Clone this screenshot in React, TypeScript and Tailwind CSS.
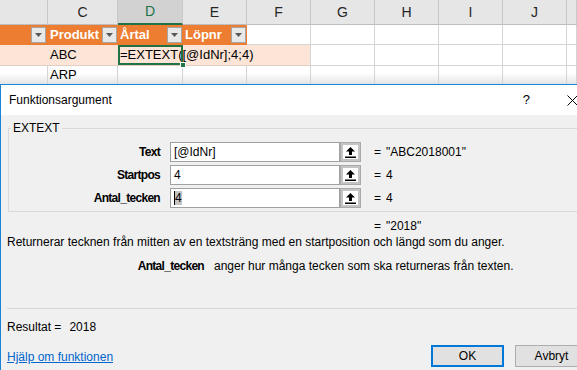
import { FC } from "react";

const cols = [
  { w: "w-[48px]", label: "" },
  { w: "w-[70px]", label: "C" },
  { w: "w-[65px]", label: "D" },
  { w: "w-[64px]", label: "E" },
  { w: "w-[64px]", label: "F" },
  { w: "w-[64px]", label: "G" },
  { w: "w-[64px]", label: "H" },
  { w: "w-[64px]", label: "I" },
  { w: "w-[64px]", label: "J" },
  { w: "w-[10px]", label: "" },
];

const Dropdown: FC = () => (
  <div className="w-[15px] h-[16px] shrink-0 bg-[#e8e8e8] border border-[#a6a6a6] flex items-center justify-center">
    <svg width="7" height="4" viewBox="0 0 7 4">
      <path d="M0 0 L7 0 L3.5 4 Z" fill="#595959" />
    </svg>
  </div>
);

const RefButton: FC = () => (
  <div className="w-[21px] h-[20px] shrink-0 border-[3px] border-[#c4c4c4] bg-white flex items-center justify-center outline outline-1 -outline-offset-1 outline-[#a9a9a9]">
    <svg width="11" height="11" viewBox="0 0 11 11">
      <path d="M5.5 0 L10 4.5 L7 4.5 L7 8 L4 8 L4 4.5 L1 4.5 Z" fill="#000" />
      <rect x="0" y="9.5" width="11" height="1.5" fill="#000" />
    </svg>
  </div>
);

const ArgRow: FC<{ label: string; value: string; result: string; caret?: boolean }> = ({
  label,
  value,
  result,
  caret,
}) => (
  <div className="flex items-center h-[20px]">
    <div className="w-[151px] text-right font-bold tracking-[-0.7px]">{label}</div>
    <div className="ml-[10px] w-[170px] h-[20px] bg-white border border-[#a0a0a0] flex items-center pl-[3px]">
      {caret ? (
        <span className="bg-[#c4c4c4] border-l border-black leading-[14px]">{value}</span>
      ) : (
        value
      )}
    </div>
    <RefButton />
    <span className="ml-[13px]">=</span>
    <span className="ml-[5px]">{result}</span>
  </div>
);

export default function App() {
  const tableHeads = ["", "Produkt", "Årtal", "Löpnr"];

  return (
    <div className="w-[577px] h-[370px] overflow-hidden bg-white font-['Liberation_Sans',Arial,sans-serif] text-black">
      {/* spreadsheet */}
      <div className="flex w-[600px] h-[25px] bg-[#e6e6e6]">
        {cols.map((c, i) => (
          <div
            key={i}
            className={`${c.w} shrink-0 flex items-center justify-center text-[14px] border-r ${
              i === 2
                ? "bg-[#d2d2d2] text-[#217346] border-b-2 border-b-[#217346] border-r-[#c8c8c8]"
                : "text-[#262626] border-b border-[#c8c8c8] border-b-[#bdbdbd]"
            }`}
          >
            {c.label}
          </div>
        ))}
      </div>
      <div className="flex w-[600px] h-[20px]">
        {cols.map((c, i) =>
          i < 4 ? (
            <div
              key={i}
              className={`${c.w} shrink-0 bg-[#ed7d31] flex items-center justify-between pl-[2px] pr-[1px] text-white font-bold text-[13px] ${
                i === 0 ? "pr-[2px]" : ""
              }`}
            >
              <span>{tableHeads[i]}</span>
              <Dropdown />
            </div>
          ) : (
            <div key={i} className={`${c.w} shrink-0 border-r border-b border-[#d4d4d4]`} />
          )
        )}
      </div>
      <div className="flex w-[600px] h-[21px] text-[13px]">
        {cols.map((c, i) =>
          i < 5 ? (
            <div
              key={i}
              className={`${c.w} shrink-0 bg-[#fce4d6] border-b border-[#e2cfc3] flex items-center pl-[2px] ${
                i === 2 ? "relative z-10" : ""
              } ${i === 4 ? "border-r border-r-[#d4d4d4]" : ""}`}
            >
              {i === 1 && "ABC"}
              {i === 2 && (
                <>
                  <span className="whitespace-nowrap">=EXTEXT([@IdNr];4;4)</span>
                  <div className="absolute left-0 top-0 right-0 bottom-0 border-2 border-[#217346]" />
                  <div className="absolute right-[-3px] bottom-[-3px] w-[6px] h-[6px] bg-[#217346] border border-white" />
                </>
              )}
            </div>
          ) : (
            <div key={i} className={`${c.w} shrink-0 border-r border-b border-[#d4d4d4]`} />
          )
        )}
      </div>
      <div className="flex w-[600px] h-[18px] text-[13px] bg-linear-to-b from-white from-40% to-[#e4e4e4]">
        {cols.map((c, i) => (
          <div key={i} className={`${c.w} shrink-0 border-r border-[#d4d4d4] flex items-center pl-[2px]`}>
            {i === 1 && "ARP"}
          </div>
        ))}
      </div>

      {/* dialog */}
      <div className="w-[600px] h-[286px] border-t border-l border-[#1883d7] bg-[#f0f0f0] text-[12px] leading-[14px]">
        <div className="h-[30px] bg-white flex items-center pl-[8px]">
          <span>Funktionsargument</span>
          <span className="ml-auto text-[13px]">?</span>
          <svg className="ml-[37px] mr-[22px]" width="11" height="11" viewBox="0 0 11 11">
            <path d="M0.5 0.5 L10.5 10.5 M10.5 0.5 L0.5 10.5" stroke="#000" strokeWidth="1" />
          </svg>
        </div>

        <fieldset className="mt-[6px] ml-[7px] mr-[7px] border border-[#d9d9d9] pb-[3px]">
          <legend className="ml-[2px] px-[2px]">EXTEXT</legend>
          <div className="mt-[7px] flex flex-col gap-[3px]">
            <ArgRow label="Text" value="[@IdNr]" result={'"ABC2018001"'} />
            <ArgRow label="Startpos" value="4" result="4" />
            <ArgRow label="Antal_tecken" value="4" result="4" caret />
          </div>
        </fieldset>

        <div className="mt-[7px] pl-[373px] flex">
          <span>=</span>
          <span className="ml-[5px]">"2018"</span>
        </div>
        <div className="mt-[2px] pl-[6px]">
          Returnerar tecknen från mitten av en textsträng med en startposition och längd som du anger.
        </div>
        <div className="mt-[10px] flex">
          <div className="w-[203px] text-right font-bold tracking-[-0.7px]">Antal_tecken</div>
          <div className="ml-[10px]">anger hur många tecken som ska returneras från texten.</div>
        </div>

        <div className="mt-[35px] ml-[6px] h-px bg-[#d7d7d7]" />

        <div className="flex justify-between">
          <div className="pl-[6px] pt-[11px]">
            <div>
              Resultat =<span className="ml-[8px]">2018</span>
            </div>
            <div className="mt-[16px] text-[#0066cc] underline">Hjälp om funktionen</div>
          </div>
          <div className="pt-[36px] pr-[12px] flex gap-[11px]">
            <button className="w-[73px] h-[22px] bg-[#e1e1e1] border-2 border-[#0078d7] text-[12px]">OK</button>
            <button className="w-[73px] h-[22px] bg-[#e1e1e1] border border-[#adadad] text-[12px]">Avbryt</button>
          </div>
        </div>
      </div>
    </div>
  );
}
